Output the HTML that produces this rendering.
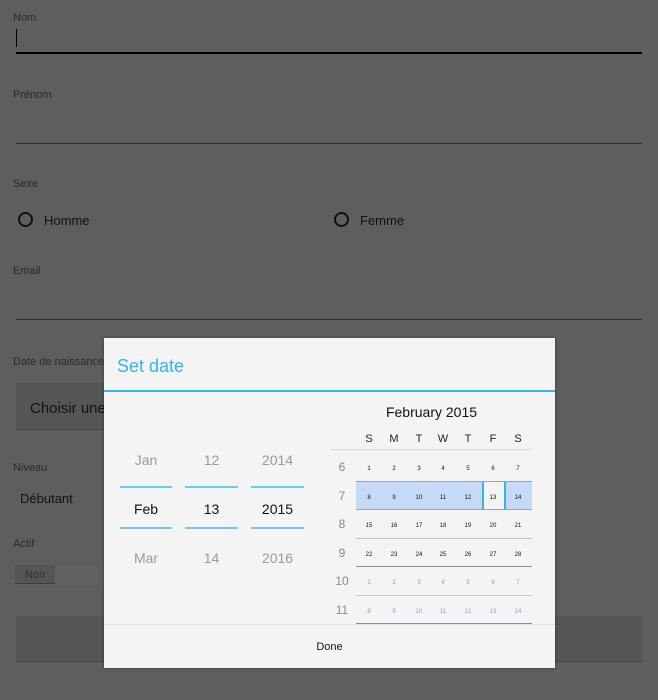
<!DOCTYPE html>
<html><head><meta charset="utf-8"><style>
*{margin:0;padding:0;box-sizing:border-box}
body{width:658px;height:700px;background:#5e5e5e;font-family:"Liberation Sans",sans-serif;position:relative;overflow:hidden}
.a{position:absolute}
.lbl{font-size:11px;color:#2a2a2a}
.cal div{position:absolute;text-align:center}
</style></head><body>
<div class="a lbl" style="left:13px;top:12px">Nom</div>
<div class="a" style="left:16px;top:29px;width:1px;height:18px;background:#000"></div>
<div class="a" style="left:16px;top:52px;width:626px;height:2px;background:#000"></div>
<div class="a lbl" style="left:13px;top:89px">Prénom</div>
<div class="a" style="left:16px;top:143px;width:626px;height:1px;background:#2e2e2e"></div>
<div class="a lbl" style="left:13px;top:178px">Sexe</div>
<div class="a" style="left:18px;top:212px;width:15px;height:15px;border:2px solid #111;border-radius:50%"></div>
<div class="a" style="left:44px;top:213px;font-size:13px;color:#111">Homme</div>
<div class="a" style="left:334px;top:212px;width:15px;height:15px;border:2px solid #111;border-radius:50%"></div>
<div class="a" style="left:360px;top:213px;font-size:13px;color:#111">Femme</div>
<div class="a lbl" style="left:13px;top:265px">Email</div>
<div class="a" style="left:16px;top:319px;width:626px;height:1px;background:#2e2e2e"></div>
<div class="a lbl" style="left:13px;top:356px">Date de naissance</div>
<div class="a" style="left:16px;top:383px;width:200px;height:47px;background:#555;border-bottom:1px solid #444"></div>
<div class="a" style="left:30px;top:400px;font-size:15px;color:#111">Choisir une date</div>
<div class="a lbl" style="left:13px;top:462px">Niveau</div>
<div class="a" style="left:20px;top:491px;font-size:13px;color:#111">Débutant</div>
<div class="a lbl" style="left:13px;top:538px">Actif</div>
<div class="a" style="left:15px;top:565px;width:82px;height:20px;background:#626262"></div>
<div class="a" style="left:15px;top:565px;width:40px;height:19px;background:#555;border-bottom:1px solid #3a3a3a;font-size:11px;color:#333;padding:4px 0 0 10px">Non</div>
<div class="a" style="left:16px;top:616px;width:626px;height:46px;background:#555;border-bottom:1px solid #444"></div>

<div class="a" style="left:104px;top:338px;width:451px;height:330px;background:#f4f4f4;box-shadow:0 0 3px rgba(0,0,0,.4)">
<div class="a" style="left:13px;top:18px;font-size:18px;color:#33b5e5">Set date</div>
<div class="a" style="left:0;top:52px;width:451px;height:2px;background:#33b5e5"></div>
<div class="a" style="left:0;top:286px;width:451px;height:1px;background:#e2e2e2"></div>
<div class="a" style="left:0;top:303px;width:451px;text-align:center;font-size:11px;color:#111">Done</div>
</div>
<div class="a" style="left:104px;top:338px;width:0;height:0">
<div class="a" style="left:16px;top:148px;width:52px;height:2px;background:#6ccaef"></div>
<div class="a" style="left:16px;top:189px;width:52px;height:2px;background:#6ccaef"></div>
<div class="a" style="left:81px;top:148px;width:53px;height:2px;background:#6ccaef"></div>
<div class="a" style="left:81px;top:189px;width:53px;height:2px;background:#6ccaef"></div>
<div class="a" style="left:147px;top:148px;width:53px;height:2px;background:#6ccaef"></div>
<div class="a" style="left:147px;top:189px;width:53px;height:2px;background:#6ccaef"></div>
</div>
<div class="a" style="left:120px;top:452px;width:52px;text-align:center;font-size:14px;color:#999">Jan</div>
<div class="a" style="left:185px;top:452px;width:53px;text-align:center;font-size:14px;color:#999">12</div>
<div class="a" style="left:251px;top:452px;width:53px;text-align:center;font-size:14px;color:#999">2014</div>
<div class="a" style="left:120px;top:501px;width:52px;text-align:center;font-size:14px;color:#111">Feb</div>
<div class="a" style="left:185px;top:501px;width:53px;text-align:center;font-size:14px;color:#111">13</div>
<div class="a" style="left:251px;top:501px;width:53px;text-align:center;font-size:14px;color:#111">2015</div>
<div class="a" style="left:120px;top:550px;width:52px;text-align:center;font-size:14px;color:#999">Mar</div>
<div class="a" style="left:185px;top:550px;width:53px;text-align:center;font-size:14px;color:#999">14</div>
<div class="a" style="left:251px;top:550px;width:53px;text-align:center;font-size:14px;color:#999">2016</div>

<div class="a cal" style="left:0;top:0">
<div style="left:331px;top:404px;width:201px;font-size:14px;color:#111">February 2015</div>
<div style="left:331px;top:449px;width:201px;height:1px;background:#d8d8d8"></div>
<div style="left:356px;top:482px;width:176px;height:27px;background:#c4daf6"></div>
<div style="left:482px;top:482px;width:24px;height:27px;background:#f4f4f4;border-left:2px solid #33b5e5;border-right:2px solid #33b5e5"></div>
<div style="left:356px;top:509px;width:176px;height:1px;background:#9aa4b8"></div>
<div style="left:356px;top:481px;width:176px;height:1px;background:#9aa4b8"></div>
<div style="left:356px;top:538px;width:176px;height:1px;background:#c0c0cc"></div>
<div style="left:356px;top:566px;width:176px;height:1px;background:#8a8aa0"></div>
<div style="left:356px;top:595px;width:176px;height:1px;background:#c8c8d0"></div>
<div style="left:356px;top:623px;width:176px;height:1px;background:#8a8aa0"></div>
</div>
<div class="a" id="c"></div>
<script>
var xs=[369,394,419,443,468,493,518],h=['S','M','T','W','T','F','S'],s='';
h.forEach(function(t,i){s+='<div style="position:absolute;left:'+(xs[i]-10)+'px;top:433px;width:20px;text-align:center;font-size:11px;color:#222">'+t+'</div>'});
var rows=[[1,7,'#111'],[8,14,'#111'],[15,21,'#111'],[22,28,'#111'],[1,7,'#999'],[8,14,'#999']];
rows.forEach(function(r,ri){var y=466+ri*28.5;
s+='<div style="position:absolute;left:332px;top:'+(y-6)+'px;width:20px;text-align:center;font-size:12px;color:#888">'+(6+ri)+'</div>';
for(var k=0;k<7;k++)s+='<div style="position:absolute;left:'+(xs[k]-10)+'px;top:'+y+'px;width:20px;text-align:center;font-size:6px;color:'+r[2]+'">'+(r[0]+k)+'</div>';});
document.getElementById('c').outerHTML=s;
</script>
</body></html>
